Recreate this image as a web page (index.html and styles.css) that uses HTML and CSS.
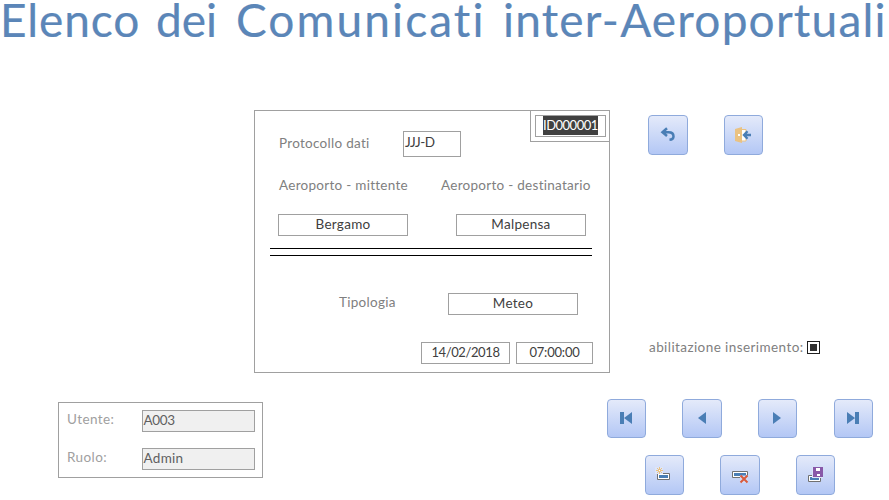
FILE: index.html
```
<!DOCTYPE html>
<html lang="it">
<head>
<meta charset="utf-8">
<title>Elenco dei Comunicati inter-Aeroportuali</title>
<link rel="stylesheet" href="styles.css">
</head>
<body>
<h1 class="title"><span class="w1">Elenco</span><span class="w2">dei</span><span class="w3">Comunicati</span><span class="w4">inter-Aeroportuali</span></h1>
<main class="upper">
  <section class="panel">
    <div class="top">
      <span class="label protocol">Protocollo dati</span>
      <div class="field code">JJJ-D</div>
      <div class="idbox"><div class="field"><span class="selected">ID000001</span></div></div>
    </div>
    <div class="airports">
      <div class="airport"><span class="label from">Aeroporto - mittente</span><div class="field wide">Bergamo</div></div>
      <div class="airport"><span class="label to">Aeroporto - destinatario</span><div class="field wide">Malpensa</div></div>
    </div>
    <div class="rule"></div>
    <div class="type"><span class="label kind">Tipologia</span><div class="field wide">Meteo</div></div>
    <div class="when"><div class="field date">14/02/2018</div><div class="field time">07:00:00</div></div>
  </section>
  <aside class="side">
    <div class="actions">
      <button class="btn tall w40" aria-label="Annulla"><svg width="40" height="40"><path d="M19 13.300L14.500 17.200l4.500 3.800M15 17.200h5.500q5 0 5 4.200 0 3-4 3.400" fill="none" stroke="#4a7eb5" stroke-width="2.500"/></svg></button>
      <button class="btn tall" aria-label="Chiudi"><svg width="39" height="40"><path d="M18 14.500h4v11.500h-4" fill="#fff" stroke="#eac282"/><path d="M11 14l7-2v16l-7-2z" fill="#eac282"/><path d="M14 19h2v2h-2z" fill="#fff"/><path d="M27 20h-7M23.500 16.300L20 20l3.500 3.700" fill="none" stroke="#4a7eb5" stroke-width="2.400"/></svg></button>
    </div>
    <label class="enable"><span class="label">abilitazione inserimento:</span><i class="check"></i></label>
  </aside>
</main>
<footer class="lower">
  <section class="user">
    <div class="row"><span class="label ut">Utente:</span><div class="field grey num">A003</div></div>
    <div class="row"><span class="label ru">Ruolo:</span><div class="field grey">Admin</div></div>
  </section>
  <nav class="controls">
    <div class="nav">
      <button class="btn" aria-label="Primo"><svg width="39" height="39"><path d="M13 13h4v12h-4zM25 13v12l-8-6z" fill="#4a7eb5"/></svg></button>
      <button class="btn w40" aria-label="Precedente"><svg width="40" height="39"><path d="M24 13v12l-8-6z" fill="#4a7eb5"/></svg></button>
      <button class="btn" aria-label="Successivo"><svg width="39" height="39"><path d="M15 13v12l8-6z" fill="#4a7eb5"/></svg></button>
      <button class="btn last" aria-label="Ultimo"><svg width="39" height="39"><path d="M13 13v12l8-6zM21 13h4v12h-4z" fill="#4a7eb5"/></svg></button>
    </div>
    <div class="edit">
      <button class="btn tall" aria-label="Nuovo"><svg width="39" height="40"><path d="M12.500 18.500h12v6h-12z" fill="#fff" stroke="#707070"/><path d="M14 20h9v3h-9z" fill="#4a7eb5"/><path d="M10 12h8v7h-8z" fill="#dde5f9"/><path d="M14.500 12v7M11 15.500h7M12 13l5 5M17 13l-5 5" stroke="#eac282"/><path d="M14 15h1v1h-1z" fill="#fff"/></svg></button>
      <button class="btn tall w40" aria-label="Elimina"><svg width="40" height="40"><path d="M12.500 16.500h15v6h-15z" fill="#fff" stroke="#707070"/><path d="M14 18h12v3H14z" fill="#4a7eb5"/><path d="M20 20.500h8v7.500h-8z" fill="#d0dbf7"/><path d="M20.500 20.500l7 7M27.500 20.500l-7 7" stroke="#d95b3c" stroke-width="2"/></svg></button>
      <button class="btn tall" aria-label="Salva"><svg width="39" height="40"><path d="M12.500 20.500h12v6h-12z" fill="#fff" stroke="#707070"/><path d="M14 22h9v3h-9z" fill="#4a7eb5"/><path d="M16 12h11v11H16z" fill="#dde5f9"/><path d="M17 12h10v10H17z" fill="#8858a8"/><path d="M20 13h4v3h-4zM21 19h3v2h-3z" fill="#fff"/></svg></button>
    </div>
  </nav>
</footer>
</body>
</html>
```
FILE: styles.css
```
* { box-sizing: border-box; }
body { margin: 0; width: 889px; height: 500px; background: #fff; color: #404040; font: 13.5px/20px Lato, "Liberation Sans", sans-serif; font-variant-ligatures: none; letter-spacing: .28px; }
.title { display: grid; grid-template-columns: 156px 80px 267px 385px; height: 110px; margin: 0; color: #5b86b8; font: 400 46px/40px Lato, sans-serif; font-variant-ligatures: none; white-space: nowrap; -webkit-text-stroke: .2px #5b86b8; }
.w1 { letter-spacing: .9px; }
.w2 { letter-spacing: 0; }
.w3 { letter-spacing: 2.1px; }
.w4 { letter-spacing: 1.2px; }
.upper { display: flex; height: 263px; padding-left: 254px; }
.panel { width: 356px; height: 263px; border: 1px solid #a0a0a0; }
.label { color: #808080; white-space: nowrap; }
.field { height: 22px; border: 1px solid #a0a0a0; text-align: center; background: #fff; line-height: 19px; white-space: nowrap; }
.top { display: flex; height: 64px; }
.protocol { width: 124px; margin: 22px 0 0 24px; }
.code { width: 58px; height: 26px; margin-top: 20px; padding-left: 1px; text-align: left; line-height: 20px; letter-spacing: -.45px; }
.idbox { width: 79px; height: 31px; margin-left: auto; padding: 4px; border: solid #a0a0a0; border-width: 0 0 1px 1px; }
.idbox .field { width: 71px; padding-left: 7px; text-align: left; }
.selected { display: block; width: 55px; height: 19px; background: #404040; color: #fff; font-size: 13px; line-height: 19px; letter-spacing: -.5px; }
.airports { display: flex; gap: 48px; padding-left: 23px; height: 73px; }
.airport { width: 130px; }
.airport .label { display: block; margin-bottom: 19px; }
.from { margin-left: 1px; }
.to { margin-left: -15px; }
.wide { width: 130px; }
.rule { height: 8px; width: 322px; margin-left: 15px; border: solid #000; border-width: 1px 0; }
.type { display: flex; margin-top: 37px; padding-left: 84px; }
.kind { width: 109px; line-height: 19px; }
.when { display: flex; gap: 6px; margin: 27px 0 0 166px; font-size: 13px; }
.date { width: 89px; letter-spacing: -.4px; }
.time { width: 77px; letter-spacing: -.2px; }
.side { padding: 5px 0 0 38px; }
.actions { display: flex; gap: 36px; }
.enable { display: flex; margin: 183px 0 0 1px; align-items: center; }
.enable .label { width: 158px; line-height: 18px; letter-spacing: .42px; }
.check { width: 13px; height: 13px; border: 1px solid #202020; padding: 2px; background: #303030 content-box; }
.btn { display: block; width: 39px; height: 39px; padding: 0; border: 1px solid #8faadc; border-radius: 4px; background: linear-gradient(#e4eafa, #b3c7f5); }
.btn svg { display: block; margin: -1px; }
.tall { height: 40px; }
.w40 { width: 40px; }
.lower { display: flex; padding: 26px 0 0 58px; }
.user { width: 205px; height: 76px; margin-top: 3px; border: 1px solid #a0a0a0; padding: 7px; }
.row { display: flex; height: 38px; padding-left: 1px; }
.row .label { width: 75px; color: #a0a0a0; line-height: 18px; letter-spacing: .4px; }
.grey { width: 114px; background: #f0f0f0; color: #606060; padding-left: 1px; text-align: left; }
.num { letter-spacing: -.4px; }
.controls { margin-left: 344px; }
.nav { display: flex; gap: 36px; }
.last { margin-left: 1px; }
.edit { display: flex; gap: 36px; margin: 17px 0 0 38px; }
```
